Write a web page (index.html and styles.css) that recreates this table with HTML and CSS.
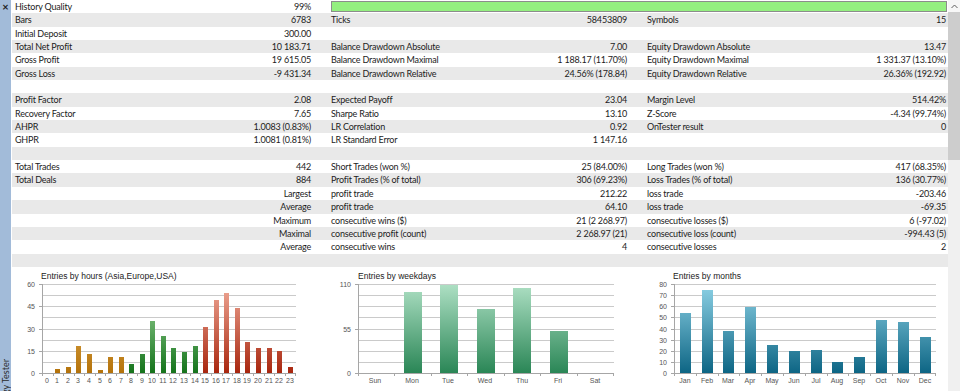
FILE: index.html
```html
<!DOCTYPE html>
<html>
<head>
<meta charset="utf-8">
<link rel="stylesheet" href="styles.css">
</head>
<body>
<div class="app">
  <aside class="side">
    <span class="close">×</span>
    <span class="side-title">Strategy Tester</span>
  </aside>
  <main class="main">
    <div class="stats">
      <div class="row"><div class="cell"><span>History Quality</span><span>99%</span></div><div class="quality"><div class="quality-bar"></div></div></div>
      <div class="row"><div class="cell"><span>Bars</span><span>6783</span></div><div class="cell"><span>Ticks</span><span>58453809</span></div><div class="cell"><span>Symbols</span><span>15</span></div></div>
      <div class="row"><div class="cell"><span>Initial Deposit</span><span>300.00</span></div><div class="cell"></div><div class="cell"></div></div>
      <div class="row"><div class="cell"><span>Total Net Profit</span><span>10 183.71</span></div><div class="cell"><span>Balance Drawdown Absolute</span><span>7.00</span></div><div class="cell"><span>Equity Drawdown Absolute</span><span>13.47</span></div></div>
      <div class="row"><div class="cell"><span>Gross Profit</span><span>19 615.05</span></div><div class="cell"><span>Balance Drawdown Maximal</span><span>1 188.17 (11.70%)</span></div><div class="cell"><span>Equity Drawdown Maximal</span><span>1 331.37 (13.10%)</span></div></div>
      <div class="row"><div class="cell"><span>Gross Loss</span><span>-9 431.34</span></div><div class="cell"><span>Balance Drawdown Relative</span><span>24.56% (178.84)</span></div><div class="cell"><span>Equity Drawdown Relative</span><span>26.36% (192.92)</span></div></div>
      <div class="row"></div>
      <div class="row"><div class="cell"><span>Profit Factor</span><span>2.08</span></div><div class="cell"><span>Expected Payoff</span><span>23.04</span></div><div class="cell"><span>Margin Level</span><span>514.42%</span></div></div>
      <div class="row"><div class="cell"><span>Recovery Factor</span><span>7.65</span></div><div class="cell"><span>Sharpe Ratio</span><span>13.10</span></div><div class="cell"><span>Z-Score</span><span>-4.34 (99.74%)</span></div></div>
      <div class="row"><div class="cell"><span>AHPR</span><span>1.0083 (0.83%)</span></div><div class="cell"><span>LR Correlation</span><span>0.92</span></div><div class="cell"><span>OnTester result</span><span>0</span></div></div>
      <div class="row"><div class="cell"><span>GHPR</span><span>1.0081 (0.81%)</span></div><div class="cell"><span>LR Standard Error</span><span>1 147.16</span></div><div class="cell"></div></div>
      <div class="row"></div>
      <div class="row"><div class="cell"><span>Total Trades</span><span>442</span></div><div class="cell"><span>Short Trades (won %)</span><span>25 (84.00%)</span></div><div class="cell"><span>Long Trades (won %)</span><span>417 (68.35%)</span></div></div>
      <div class="row"><div class="cell"><span>Total Deals</span><span>884</span></div><div class="cell"><span>Profit Trades (% of total)</span><span>306 (69.23%)</span></div><div class="cell"><span>Loss Trades (% of total)</span><span>136 (30.77%)</span></div></div>
      <div class="row"><div class="cell"><span></span><span>Largest</span></div><div class="cell"><span>profit trade</span><span>212.22</span></div><div class="cell"><span>loss trade</span><span>-203.46</span></div></div>
      <div class="row"><div class="cell"><span></span><span>Average</span></div><div class="cell"><span>profit trade</span><span>64.10</span></div><div class="cell"><span>loss trade</span><span>-69.35</span></div></div>
      <div class="row"><div class="cell"><span></span><span>Maximum</span></div><div class="cell"><span>consecutive wins ($)</span><span>21 (2 268.97)</span></div><div class="cell"><span>consecutive losses ($)</span><span>6 (-97.02)</span></div></div>
      <div class="row"><div class="cell"><span></span><span>Maximal</span></div><div class="cell"><span>consecutive profit (count)</span><span>2 268.97 (21)</span></div><div class="cell"><span>consecutive loss (count)</span><span>-994.43 (5)</span></div></div>
      <div class="row"><div class="cell"><span></span><span>Average</span></div><div class="cell"><span>consecutive wins</span><span>4</span></div><div class="cell"><span>consecutive losses</span><span>2</span></div></div>
      <div class="row"></div>
    </div>

    <div class="charts">
      <div class="chart">
        <svg width="316" height="124" viewBox="0 0 316 124">
          <defs>
            <linearGradient id="gOr" gradientUnits="userSpaceOnUse" x1="0" y1="17" x2="0" y2="106"><stop offset="0" stop-color="#f2c46e"/><stop offset="1" stop-color="#b4720a"/></linearGradient>
            <linearGradient id="gGr" gradientUnits="userSpaceOnUse" x1="0" y1="17" x2="0" y2="106"><stop offset="0" stop-color="#a6dca2"/><stop offset="1" stop-color="#15731b"/></linearGradient>
            <linearGradient id="gRd" gradientUnits="userSpaceOnUse" x1="0" y1="17" x2="0" y2="106"><stop offset="0" stop-color="#f0aa98"/><stop offset="1" stop-color="#a8260e"/></linearGradient>
          </defs>
          <text class="ttl" x="29" y="12">Entries by hours (Asia,Europe,USA)</text>
          <path class="grid" d="M30 17.5H284M30 28.5H284M30 39.5H284M30 50.5H284M30 62.5H284M30 73.5H284M30 84.5H284M30 95.5H284"/>
          <path class="axis" d="M27 17.5H30M27 39.5H30M27 62.5H30M27 84.5H30M27 106.5H284M30.5 17V109M41.5 106V109M51.5 106V109M62.5 106V109M72.5 106V109M83.5 106V109M93.5 106V109M104.5 106V109M115.5 106V109M125.5 106V109M136.5 106V109M146.5 106V109M157.5 106V109M167.5 106V109M178.5 106V109M188.5 106V109M199.5 106V109M210.5 106V109M220.5 106V109M231.5 106V109M241.5 106V109M252.5 106V109M262.5 106V109M273.5 106V109M283.5 106V109"/>
          <g class="ylab">
            <text x="23" y="20">60</text><text x="23" y="42">45</text><text x="23" y="65">30</text><text x="23" y="87">15</text><text x="23" y="109">0</text>
          </g>
          <g fill="url(#gOr)">
            <rect x="43" y="102" width="5" height="4"/><rect x="54" y="100" width="5" height="6"/><rect x="64" y="79" width="5" height="27"/><rect x="75" y="87" width="5" height="19"/><rect x="86" y="103" width="5" height="3"/><rect x="96" y="90" width="5" height="16"/><rect x="107" y="90" width="5" height="16"/>
          </g>
          <g fill="url(#gGr)">
            <rect x="117" y="97" width="5" height="9"/><rect x="128" y="87" width="5" height="19"/><rect x="138" y="54" width="5" height="52"/><rect x="149" y="69" width="5" height="37"/><rect x="159" y="81" width="5" height="25"/><rect x="170" y="85" width="5" height="21"/><rect x="181" y="79" width="5" height="27"/>
          </g>
          <g fill="url(#gRd)">
            <rect x="191" y="60" width="5" height="46"/><rect x="202" y="33" width="5" height="73"/><rect x="212" y="26" width="5" height="80"/><rect x="223" y="41" width="5" height="65"/><rect x="233" y="75" width="5" height="31"/><rect x="244" y="81" width="5" height="25"/><rect x="255" y="81" width="5" height="25"/><rect x="265" y="84" width="5" height="22"/><rect x="276" y="100" width="5" height="6"/>
          </g>
          <g class="xlab">
            <text x="35" y="116">0</text><text x="45" y="116">1</text><text x="56" y="116">2</text><text x="66" y="116">3</text><text x="77" y="116">4</text><text x="88" y="116">5</text><text x="98" y="116">6</text><text x="109" y="116">7</text><text x="119" y="116">8</text><text x="130" y="116">9</text><text x="140" y="116">10</text><text x="151" y="116">11</text><text x="161" y="116">12</text><text x="172" y="116">13</text><text x="183" y="116">14</text><text x="193" y="116">15</text><text x="204" y="116">16</text><text x="214" y="116">17</text><text x="225" y="116">18</text><text x="235" y="116">19</text><text x="246" y="116">20</text><text x="257" y="116">21</text><text x="267" y="116">22</text><text x="278" y="116">23</text>
          </g>
        </svg>
      </div>

      <div class="chart">
        <svg width="316" height="124" viewBox="0 0 316 124">
          <defs>
            <linearGradient id="gWk" gradientUnits="userSpaceOnUse" x1="0" y1="17" x2="0" y2="106"><stop offset="0" stop-color="#aee0c4"/><stop offset="1" stop-color="#2a8656"/></linearGradient>
          </defs>
          <text class="ttl" x="30" y="12">Entries by weekdays</text>
          <path class="grid" d="M30 17.5H286M30 28.5H286M30 39.5H286M30 50.5H286M30 62.5H286M30 73.5H286M30 84.5H286M30 95.5H286"/>
          <path class="axis" d="M27 17.5H30M27 62.5H30M27 106.5H286M30.5 17V109M66.5 106V109M103.5 106V109M139.5 106V109M176.5 106V109M212.5 106V109M249.5 106V109M285.5 106V109"/>
          <g class="ylab">
            <text x="23" y="20">110</text><text x="23" y="65">55</text><text x="23" y="109">0</text>
          </g>
          <g fill="url(#gWk)">
            <rect x="76" y="25" width="18" height="81"/><rect x="112" y="18" width="18" height="88"/><rect x="149" y="42" width="18" height="64"/><rect x="185" y="21" width="18" height="85"/><rect x="222" y="64" width="18" height="42"/>
          </g>
          <g class="xlab">
            <text x="47" y="116">Sun</text><text x="84" y="116">Mon</text><text x="120" y="116">Tue</text><text x="157" y="116">Wed</text><text x="194" y="116">Thu</text><text x="230" y="116">Fri</text><text x="267" y="116">Sat</text>
          </g>
        </svg>
      </div>

      <div class="chart">
        <svg width="304" height="124" viewBox="0 0 304 124">
          <defs>
            <linearGradient id="gMo" gradientUnits="userSpaceOnUse" x1="0" y1="17" x2="0" y2="106"><stop offset="0" stop-color="#8ed2e6"/><stop offset="1" stop-color="#0d6584"/></linearGradient>
          </defs>
          <text class="ttl" x="29" y="12">Entries by months</text>
          <path class="grid" d="M30 17.5H292M30 28.5H292M30 39.5H292M30 50.5H292M30 62.5H292M30 73.5H292M30 84.5H292M30 95.5H292"/>
          <path class="axis" d="M27 17.5H30M27 28.5H30M27 39.5H30M27 50.5H30M27 62.5H30M27 73.5H30M27 84.5H30M27 95.5H30M27 106.5H292M30.5 17V109M52.5 106V109M74.5 106V109M95.5 106V109M117.5 106V109M139.5 106V109M161.5 106V109M183.5 106V109M204.5 106V109M226.5 106V109M248.5 106V109M270.5 106V109M291.5 106V109"/>
          <g class="ylab">
            <text x="23" y="20">80</text><text x="23" y="31">70</text><text x="23" y="42">60</text><text x="23" y="53">50</text><text x="23" y="65">40</text><text x="23" y="76">30</text><text x="23" y="87">20</text><text x="23" y="98">10</text><text x="23" y="109">0</text>
          </g>
          <g fill="url(#gMo)">
            <rect x="36" y="46" width="11" height="60"/><rect x="58" y="23" width="11" height="83"/><rect x="79" y="64" width="11" height="42"/><rect x="101" y="40" width="11" height="66"/><rect x="123" y="78" width="11" height="28"/><rect x="145" y="84" width="11" height="22"/><rect x="167" y="83" width="11" height="23"/><rect x="188" y="95" width="11" height="11"/><rect x="210" y="90" width="11" height="16"/><rect x="232" y="53" width="11" height="53"/><rect x="254" y="55" width="11" height="51"/><rect x="276" y="70" width="11" height="36"/>
          </g>
          <g class="xlab">
            <text x="41" y="116">Jan</text><text x="63" y="116">Feb</text><text x="84" y="116">Mar</text><text x="106" y="116">Apr</text><text x="128" y="116">May</text><text x="150" y="116">Jun</text><text x="172" y="116">Jul</text><text x="193" y="116">Aug</text><text x="215" y="116">Sep</text><text x="237" y="116">Oct</text><text x="259" y="116">Nov</text><text x="281" y="116">Dec</text>
          </g>
        </svg>
      </div>
    </div>
  </main>
  <div class="scroll">
    <div class="scroll-up"><svg width="7" height="5" viewBox="0 0 7 5"><path d="M0.5 4L3.5 1L6.5 4" fill="none" stroke="#606060" stroke-width="1"/></svg></div>
    <div class="scroll-thumb"></div>
  </div>
</div>
</body>
</html>
```

FILE: styles.css
```css
* { box-sizing: border-box; }
html, body { margin: 0; padding: 0; }
body {
  width: 960px;
  height: 391px;
  overflow: hidden;
  background: #fff;
  font-family: Lato, "Liberation Sans", Arial, sans-serif;
  font-size: 9px;
  color: #1c1c1c;
}
.app { display: flex; height: 391px; }

.side {
  width: 11px;
  flex: none;
  background: #a2bbd9;
  display: flex;
  flex-direction: column;
  align-items: center;
  overflow: hidden;
}
.close {
  font-size: 11px;
  font-weight: 700;
  line-height: 12px;
  margin-top: 1px;
  color: #1e1e1e;
}
.side-title {
  margin-top: auto;
  margin-bottom: -27px;
  writing-mode: vertical-rl;
  transform: rotate(180deg);
  white-space: nowrap;
  font-size: 9px;
  line-height: 11px;
  color: #2a2a2a;
}

.main {
  width: 936px;
  flex: none;
  margin-left: 1px;
  display: flex;
  flex-direction: column;
}
.stats { display: flex; flex-direction: column; letter-spacing: -0.2px; }
.row {
  display: grid;
  grid-template-columns: 316px 316px 304px;
  height: 13.35px;
  line-height: 13.35px;
}
.row:nth-child(even) { background: #e9e9e9; }
.cell {
  display: flex;
  justify-content: space-between;
  padding: 0 17px 0 3px;
  white-space: nowrap;
}
.cell:nth-child(3) { padding-right: 2px; }
.quality { grid-column: 2 / 4; padding: 1px 1px 1px 3px; }
.quality-bar {
  height: 100%;
  background: #94ef80;
  border: 1px solid #8c8c8c;
}

.charts {
  display: grid;
  grid-template-columns: 316px 316px 304px;
  height: 124px;
}
.chart svg { display: block; }
.ttl { font-family: "Liberation Sans", Arial, sans-serif; font-size: 8.5px; fill: #222; }
.ylab text { font-family: "Liberation Sans", Arial, sans-serif; font-size: 7px; fill: #555; text-anchor: end; }
.xlab text { font-family: "Liberation Sans", Arial, sans-serif; font-size: 7px; fill: #555; text-anchor: middle; }
.grid { stroke: #cacaca; stroke-width: 1; fill: none; }
.axis { stroke: #a6a6a6; stroke-width: 1; fill: none; }

.scroll {
  width: 12px;
  flex: none;
  background: #f0f0f0;
  display: flex;
  flex-direction: column;
}
.scroll-up {
  height: 12px;
  background: #f7f7f7;
  display: flex;
  align-items: center;
  justify-content: center;
}
.scroll-up svg { display: block; }
.scroll-thumb { height: 148px; background: #cdcdcd; }
```
